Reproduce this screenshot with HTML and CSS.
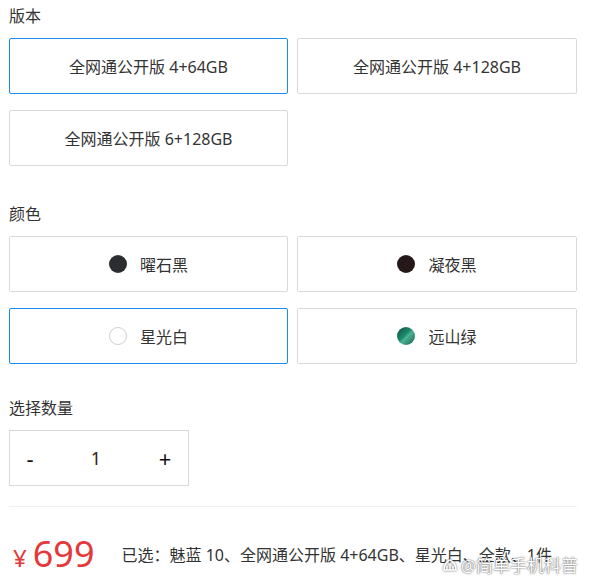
FILE: index.html
```html
<!DOCTYPE html>
<html lang="zh-CN">
<head>
<meta charset="utf-8">
<link rel="stylesheet" href="styles.css">
</head>
<body>
<div class="page">
  <section class="group">
    <div class="label">版本</div>
    <div class="options">
      <div class="opt selected">全网通公开版 4+64GB</div>
      <div class="opt">全网通公开版 4+128GB</div>
      <div class="opt">全网通公开版 6+128GB</div>
    </div>
  </section>
  <section class="group colors">
    <div class="label">颜色</div>
    <div class="options">
      <div class="opt"><span class="dot d-obsidian"></span>曜石黑</div>
      <div class="opt"><span class="dot d-night"></span>凝夜黑</div>
      <div class="opt selected"><span class="dot d-white"></span>星光白</div>
      <div class="opt"><span class="dot d-green"></span>远山绿</div>
    </div>
  </section>
  <section class="group qty-group">
    <div class="label">选择数量</div>
    <div class="qty">
      <span class="qbtn">-</span>
      <span class="qval">1</span>
      <span class="qbtn plus">+</span>
    </div>
  </section>
  <div class="divider"></div>
  <div class="summary">
    <span class="price"><span class="yen">¥</span>699</span>
    <span class="chosen">已选：魅蓝 10、全网通公开版 4+64GB、星光白、全款、1件</span>
  </div>
  <div class="watermark"><svg class="wm-logo" width="16" height="14" viewBox="0 0 16 14"><path d="M2 12 C2 7 5 3 8 2 C11 3 14 7 14 12 Z" fill="none" stroke="#fff" stroke-width="1.6"/><path d="M5 12 V8 M8 12 V6 M11 12 V8" stroke="#fff" stroke-width="1.4"/></svg>@简单手机科普</div>
</div>
</body>
</html>
```
FILE: styles.css
```css
* { box-sizing: border-box; }
html, body { margin: 0; padding: 0; background: #fff; }
body {
  font-family: "Noto Sans", "Noto Sans CJK SC", sans-serif;
  color: #333;
  font-size: 16px;
}
.page {
  position: relative;
  width: 590px;
  height: 588px;
  padding: 5px 13px 0 9px;
}
.label {
  line-height: 22px;
  height: 22px;
  font-size: 16px;
  color: #333;
  margin-bottom: 11px;
}
.options {
  display: grid;
  grid-template-columns: 279px 280px;
  column-gap: 9px;
  row-gap: 16px;
}
.opt {
  height: 56px;
  border: 1px solid #d9d9d9;
  border-radius: 2px;
  display: flex;
  align-items: center;
  justify-content: center;
  font-size: 16px;
  color: #333;
}
.opt.selected { border-color: #1a8cf0; }
.colors { margin-top: 37px; }
.qty-group { margin-top: 33px; }
.dot {
  width: 18px;
  height: 18px;
  border-radius: 50%;
  margin-right: 13px;
  flex: none;
}
.d-obsidian { background: #2b2d32; }
.d-night { background: #241918; }
.d-white { background: #fff; border: 1px solid #cfcfcf; }
.d-green { background: linear-gradient(135deg, #0a4c3e 0%, #1f8a6e 45%, #4cb394 55%, #0f5e4b 100%); }
.qty {
  width: 180px;
  height: 56px;
  border: 1px solid #d9d9d9;
  display: grid;
  grid-template-columns: 40px 1fr 46px;
  align-items: center;
  text-align: center;
}
.qbtn { font-size: 22px; color: #111; line-height: 1; }
.qval { font-size: 18px; color: #3a1a1a; }
.divider {
  margin-top: 20px;
  height: 1px;
  background: #f0f0f0;
  width: 568px;
}
.summary {
  display: flex;
  align-items: baseline;
  margin-top: 23px;
  padding-left: 4px;
}
.price {
  color: #e5383b;
  font-size: 36px;
  line-height: 48px;
  margin-right: 27px;
}
.yen { font-size: 24px; margin-right: 6px; }
.chosen { font-size: 16px; color: #333; position: relative; top: -6px; }
.watermark {
  position: absolute;
  right: 12px;
  bottom: 11px;
  display: flex;
  align-items: center;
  gap: 3px;
  font-size: 17px;
  color: #fff;
  text-shadow: 0 0 2px rgba(0,0,0,0.55), 0 0 1px rgba(0,0,0,0.5);
}
.wm-logo { filter: drop-shadow(0 0 1px rgba(0,0,0,0.6)); }
```
